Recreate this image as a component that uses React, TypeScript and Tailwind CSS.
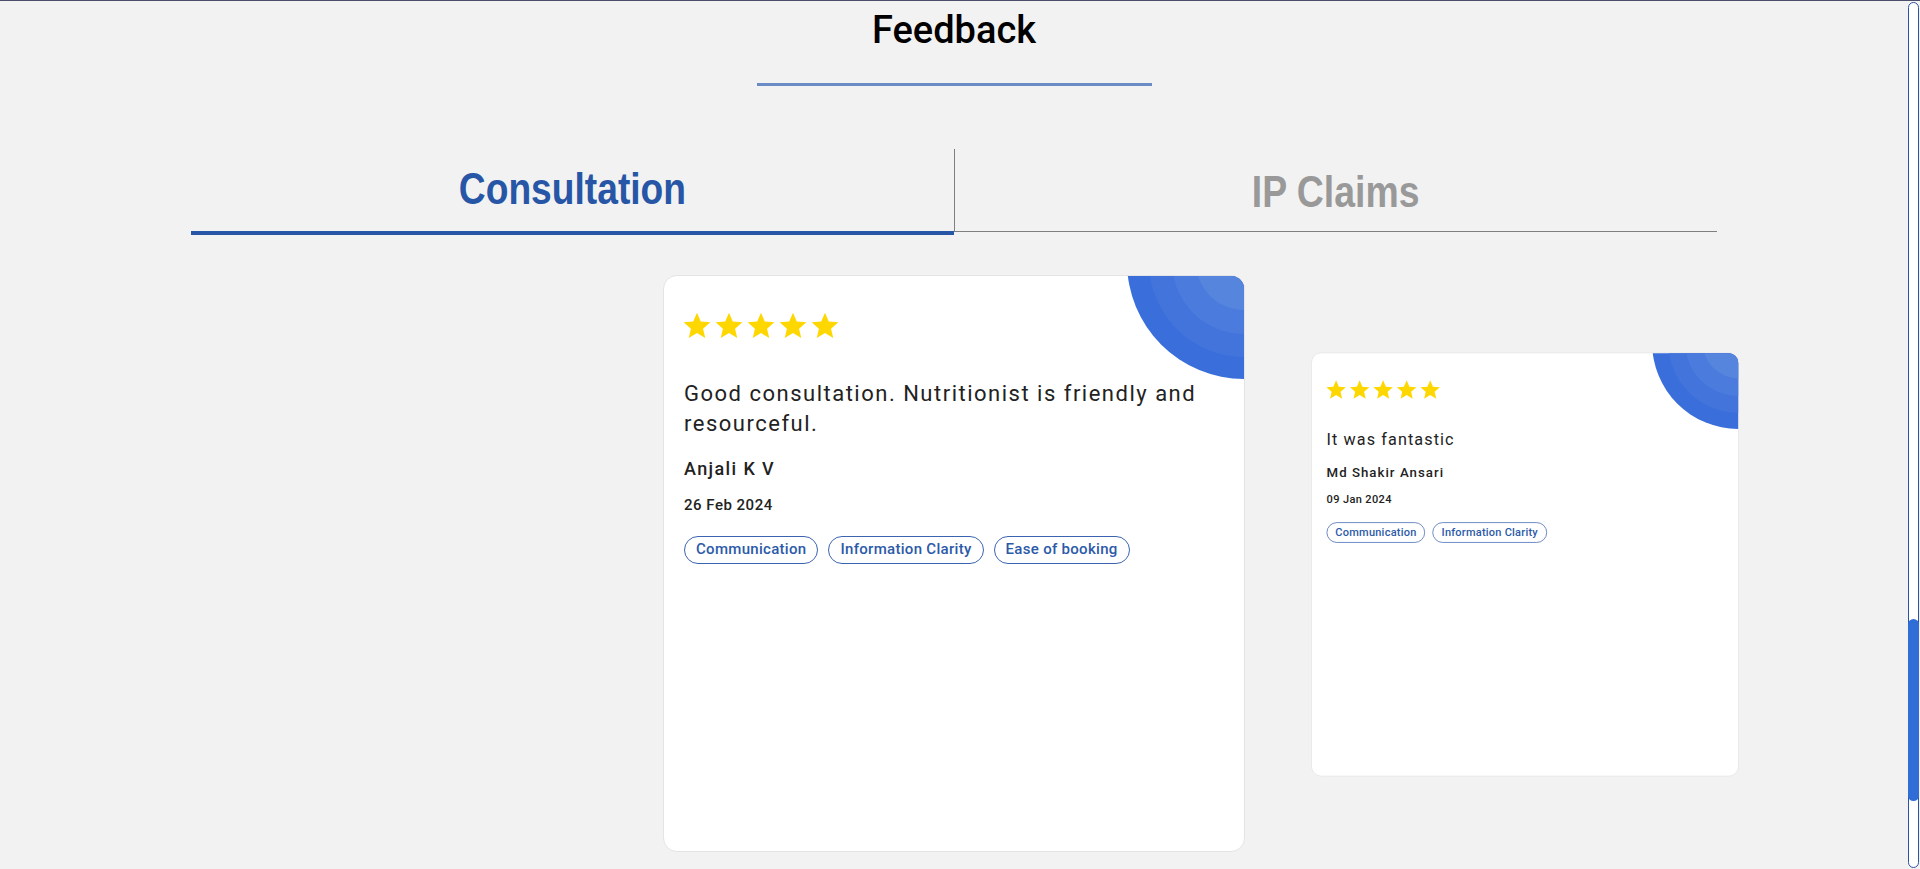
import React from 'react'
import { MdStar } from 'react-icons/md'

type Review = {
  text: string
  name: string
  date: string
  tags: string[]
}

const reviews: Review[] = [
  {
    text: 'Good consultation. Nutritionist is friendly and resourceful.',
    name: 'Anjali K V',
    date: '26 Feb 2024',
    tags: ['Communication', 'Information Clarity', 'Ease of booking'],
  },
  {
    text: 'It was fantastic',
    name: 'Md Shakir Ansari',
    date: '09 Jan 2024',
    tags: ['Communication', 'Information Clarity'],
  },
]

export default function App() {
  return (
    <div className="h-screen flex bg-[#f2f2f2] border-t border-[#4a4e6b] overflow-hidden font-['Roboto',sans-serif]">
      <main className="flex-1 flex flex-col items-center">
        <h1 className="pt-[6px] text-[38px] leading-[46px] font-medium text-black">Feedback</h1>
        <div className="mt-[30px] w-[395px] h-[3px] bg-[#6b8bc4]" />

        {/* Tabs */}
        <div className="mt-[63px] w-[80%] flex items-start font-['Liberation_Sans',Arial,sans-serif] font-bold">
          <button className="flex-1 h-[86px] border-b-4 border-[#2756a6] flex items-center justify-center pb-[3px] text-[44px] text-[#2756a6]">
            <span className="inline-block scale-x-[0.845]">Consultation</span>
          </button>
          <button className="flex-1 h-[83px] border-l border-b border-[#808080] flex items-center justify-center pt-[3px] text-[44px] text-[#999999]">
            <span className="inline-block scale-x-[0.85]">IP Claims</span>
          </button>
        </div>

        {/* Carousel */}
        <div className="mt-[38px] flex items-center justify-center w-full">
          <div className="w-[582px] h-[577px] -mr-[11px] shrink-0" />
          <ReviewCard review={reviews[0]} />
          <div className="-ml-[11px] mt-[3px] shrink-0 scale-[0.735]">
            <ReviewCard review={reviews[1]} />
          </div>
        </div>
      </main>

      {/* Scrollbar */}
      <div className="w-[11px] mr-[1px] mt-[1px] mb-[1px] flex flex-col rounded-full border border-[#2b54a3] bg-white">
        <div className="h-[616px]" />
        <div className="h-[182px] -mx-[1px] rounded-full bg-[#316dd6]" />
      </div>
    </div>
  )
}

function ReviewCard({ review }: { review: Review }) {
  return (
    <div className="relative w-[582px] h-[577px] shrink-0 overflow-hidden rounded-[14px] border border-[#e4e4e4] bg-white px-5 pt-[34px] text-[#222]">
      {/* Corner decoration */}
      <div className="absolute -right-[117px] -top-[131px] w-[234px] h-[234px] rounded-full bg-[#3a6edb] flex items-center justify-center">
        <div className="w-[190px] h-[190px] rounded-full bg-[#4374db] flex items-center justify-center">
          <div className="w-[144px] h-[144px] rounded-full bg-[#4b7bdc] flex items-center justify-center">
            <div className="w-[96px] h-[96px] rounded-full bg-[#5685de]" />
          </div>
        </div>
      </div>

      <div className="relative flex -ml-[3px] text-[#ffd700]">
        {[0, 1, 2, 3, 4].map((i) => (
          <MdStar key={i} size={32} />
        ))}
      </div>

      <p className="relative mt-[37px] text-[22px] leading-[30px] tracking-[1.5px] text-[#222]">
        {review.text}
      </p>
      <div className="mt-[18px] text-[18px] leading-[24px] font-medium tracking-[1.4px]">{review.name}</div>
      <div className="mt-[14px] text-[15px] leading-[20px] font-medium tracking-[0.5px]">{review.date}</div>
      <div className="mt-[21px] flex flex-wrap gap-[10px]">
        {review.tags.map((tag) => (
          <span
            key={tag}
            className="h-[28px] px-[11px] flex items-center rounded-full border border-[#3c64b1] text-[15px] font-medium tracking-[0.3px] text-[#2c5aa8]"
          >
            {tag}
          </span>
        ))}
      </div>
    </div>
  )
}
